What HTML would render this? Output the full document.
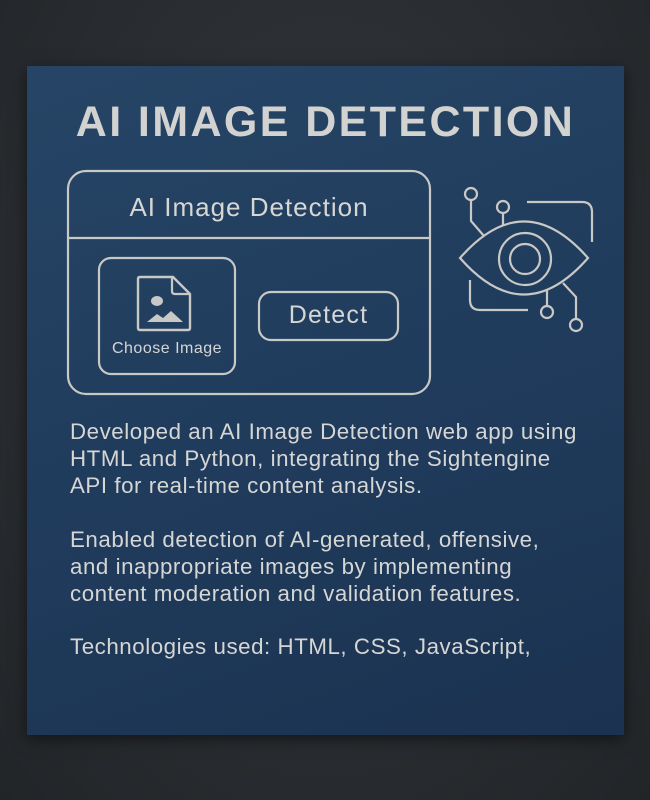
<!DOCTYPE html>
<html><head><meta charset="utf-8"><style>
html,body{margin:0;padding:0}
body{width:650px;height:800px;background:radial-gradient(ellipse at 50% 40%,#33373c,#222528);position:relative;overflow:hidden;font-family:"Liberation Sans",sans-serif;color:#d6d6d4}
.card{position:absolute;left:27px;top:66px;width:597px;height:669px;background:linear-gradient(160deg,#264566,#1f3a5a 60%,#1b3250);box-shadow:0 4px 14px rgba(0,0,0,.5)}
.t{position:absolute;width:597px;text-align:center;top:98px;font-size:43px;font-weight:bold;letter-spacing:2.4px;color:#d2d2d0}
.p{position:absolute;left:70px;font-size:22.3px;line-height:27px;white-space:nowrap;letter-spacing:.55px}
</style></head><body>
<div class="card"></div>
<div class="t" style="left:27px">AI IMAGE DETECTION</div>
<svg width="650" height="800" style="position:absolute;left:0;top:0" fill="none" stroke="#c8c8c6" stroke-width="2.2">
<rect x="68" y="171" width="362" height="223" rx="18"/>
<line x1="68" y1="238" x2="430" y2="238"/>
<rect x="99" y="258" width="136" height="116" rx="12"/>
<rect x="259" y="292" width="139" height="48" rx="12"/>
<path d="M140 277h33l17 17v34q0 2-2 2h-48q-2 0-2-2v-49q0-2 2-2z" stroke-width="2.4"/>
<path d="M172 277v14q0 3 3 3h15" stroke-width="2.2"/>
<ellipse cx="157" cy="301" rx="6" ry="5" fill="#c8c8c6" stroke="none"/>
<path d="M147 322l10-8 6 4 8-7 12 11z" fill="#c8c8c6" stroke="none"/>
<path d="M460 258Q524 185 588 258Q524 331 460 258Z"/>
<circle cx="525" cy="259" r="26"/>
<circle cx="525" cy="259" r="15"/>
<circle cx="471" cy="194" r="6"/>
<path d="M471 200V221L484 236"/>
<circle cx="503" cy="207" r="6"/>
<path d="M503 213V226"/>
<path d="M527 202H582Q592 202 592 212V242"/>
<path d="M470 280V300Q470 310 480 310H528"/>
<circle cx="547" cy="312" r="6"/>
<path d="M547 306V290"/>
<path d="M563 283L576 297V318"/>
<circle cx="576" cy="325" r="6"/>
</svg>
<div style="position:absolute;left:68px;width:362px;top:192px;text-align:center;font-size:26px;letter-spacing:1px;color:#d6d6d4">AI Image Detection</div>
<div style="position:absolute;left:99px;width:136px;top:340px;text-align:center;font-size:16px;letter-spacing:.5px">Choose Image</div>
<div style="position:absolute;left:259px;width:139px;top:301px;text-align:center;font-size:25px;letter-spacing:1.2px">Detect</div>
<div class="p" style="top:418px">Developed an AI Image Detection web app using<br>HTML and Python, integrating the Sightengine<br>API for real-time content analysis.</div>
<div class="p" style="top:526px">Enabled detection of AI-generated, offensive,<br>and inappropriate images by implementing<br>content moderation and validation features.</div>
<div class="p" style="top:633px">Technologies used: HTML, CSS, JavaScript,</div>
</body></html>
